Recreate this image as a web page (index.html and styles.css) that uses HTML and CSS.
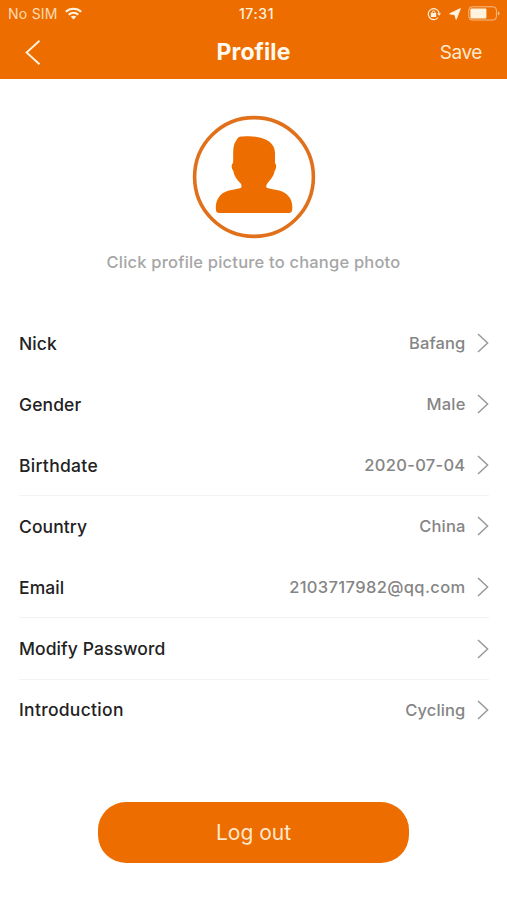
FILE: index.html
```html
<!DOCTYPE html>
<html lang="en">
<head>
<meta charset="utf-8">
<title>Profile</title>
<link rel="stylesheet" href="styles.css">
</head>
<body>
<svg width="0" height="0" class="defs">
  <symbol id="chevron" viewBox="0 0 12 20"><path d="M1 1l9.6 9L1 19" fill="none" stroke="currentColor" stroke-width="1.5"/></symbol>
</svg>
<header class="header">
  <div class="status">
    <div class="carrier">
      <span class="sim">No SIM</span>
      <svg class="wifi" width="17" height="13" viewBox="0 0 17 13" fill="none" stroke="currentColor" stroke-width="2.200">
        <path d="M.8 4.800C5 .7 12 .7 16.200 4.800"/>
        <path d="M3.700 7.800c2.800-2.500 6.800-2.500 9.600 0"/>
        <path d="M8.500 12.600L5.700 9.800c1.600-1.400 4-1.400 5.600 0z" fill="currentColor" stroke="none"/>
      </svg>
    </div>
    <span class="time">17:31</span>
    <div class="indicators">
      <svg class="lock" width="14" height="14" viewBox="0 0 14 14" fill="none" stroke="currentColor">
        <path d="M11.1 10.5A5.500 5.500 0 1 1 12.100 6" stroke-width="1.2"/>
        <path d="M10.200 6.200h3.800l-1.900 2.600z" fill="currentColor" stroke="none"/>
        <rect x="3.800" y="6" width="5.400" height="4" rx=".5" fill="currentColor" stroke="none"/>
        <path d="M5.100 6.500V5.300a1.400 1.400 0 0 1 2.800 0v1.200" stroke-width="1"/>
      </svg>
      <svg class="arrow" width="12" height="12" viewBox="0 0 12 12"><path d="M11.400.6L7.200 11.400 5.800 6.800.6 5.800z" fill="currentColor" stroke="currentColor" stroke-width=".9" stroke-linejoin="round"/></svg>
      <svg class="battery" width="32" height="15" viewBox="0 0 32 15">
        <rect x=".8" y=".8" width="27.600" height="13.200" rx="3.300" fill="none" stroke="currentColor" stroke-width="1" opacity=".6"/>
        <rect x="2.400" y="2.600" width="16" height="9.800" rx="1" fill="currentColor"/>
        <path d="M29.800 5.200q1.800.6 1.800 2.200t-1.800 2.200z" fill="currentColor" opacity=".6"/>
      </svg>
    </div>
  </div>
  <nav class="nav">
    <svg class="back" width="16" height="25" viewBox="0 0 16 25"><path d="M14.500.8L1.600 12.500l12.900 11.700" fill="none" stroke="currentColor" stroke-width="1.900"/></svg>
    <h1 class="title">Profile</h1>
    <span class="save">Save</span>
  </nav>
</header>
<main>
  <section class="photo">
    <svg class="avatar" width="124" height="124" viewBox="0 0 124 124">
      <circle cx="62" cy="62" r="59.400" fill="#fff" stroke="#e1701b" stroke-width="3.600"/>
      <path d="M41.200 37.500C41.200 29.500 43.500 26.500 45 24.200C46.200 22 48 21.600 51 21.600C58 20.600 66 21.300 73 24.200C80.500 27.500 83.600 33 83 40.500V48.300C84.700 49 84.500 54 82.600 56C81.800 61.500 78 65 75.300 68.500C74 70.500 73.800 72 74.800 72.700C78 74.500 88 74 94 78.700C99.500 83 100.700 88.500 100.200 94.500C100 97 99 98 96.500 98H27.500C25 98 24 97 23.900 94.500C23.500 88.500 25 83 30 78.700C36.500 74 46 74.500 49.200 72.700C50 71 49.500 69.500 48 67.800C45 64.500 42 61 41.400 56C39.300 54 39.200 49 40.900 48.300C41.500 45 41 41 41.200 37.500Z" fill="#ed6d00"/>
    </svg>
    <p class="hint">Click profile picture to change photo</p>
  </section>
  <section class="list">
    <div class="row"><span>Nick</span><span class="value">Bafang</span><svg class="chevron"><use href="#chevron"/></svg></div>
    <div class="row"><span>Gender</span><span class="value">Male</span><svg class="chevron"><use href="#chevron"/></svg></div>
    <div class="row line"><span class="wide">Birthdate</span><span class="value date">2020-07-04</span><svg class="chevron"><use href="#chevron"/></svg></div>
    <div class="row"><span>Country</span><span class="value">China</span><svg class="chevron"><use href="#chevron"/></svg></div>
    <div class="row line"><span>Email</span><span class="value email">2103717982@qq.com</span><svg class="chevron"><use href="#chevron"/></svg></div>
    <div class="row line"><span>Modify Password</span><span class="value"></span><svg class="chevron"><use href="#chevron"/></svg></div>
    <div class="row"><span class="wide">Introduction</span><span class="value">Cycling</span><svg class="chevron"><use href="#chevron"/></svg></div>
  </section>
  <button class="logout">Log out</button>
</main>
</body>
</html>
```
FILE: styles.css
```css
* { box-sizing: border-box; }
body {
  margin: 0;
  height: 900px;
  overflow: hidden;
  background: #fff;
  color: #222;
  font-family: Inter, "Liberation Sans", sans-serif;
}
.defs { display: block; height: 0; }
.header { height: 79px; background: #ed6d00; color: #fff3df; }
.status {
  display: grid;
  grid-template-columns: 1fr auto 1fr;
  align-items: center;
  height: 27px;
  padding: 0 7px 0 8px;
}
.carrier { display: flex; align-items: center; gap: 7px; }
.sim { font-size: 14px; letter-spacing: .25px; color: #ffdcb0; }
.time { margin-left: 5px; font-size: 14px; font-weight: 500; letter-spacing: .6px; }
.indicators { display: flex; justify-content: flex-end; align-items: center; }
.lock { margin-right: 8px; }
.arrow { margin-right: 7px; }
.nav {
  display: grid;
  grid-template-columns: 1fr auto 1fr;
  align-items: center;
  height: 50px;
  padding: 0 25px;
}
.title { margin: 0; font-size: 23px; font-weight: 700; line-height: 28px; letter-spacing: .1px; color: #fff9ee; }
.save { justify-self: end; padding-top: 1px; font-size: 19px; letter-spacing: -.4px; color: #ffe8cb; }
.photo { display: flex; flex-direction: column; align-items: center; padding-top: 36px; }
.avatar { display: block; }
.hint { margin: 13px 0 0; font-size: 16.5px; line-height: 20px; font-weight: 500; letter-spacing: .2px; color: #a6a6a6; }
.list { margin-top: 41px; padding: 0 18px 0 19px; }
.row {
  display: flex;
  align-items: center;
  height: 61.1px;
  border-bottom: 1.5px solid transparent;
  font-size: 17.5px;
  font-weight: 500;
  letter-spacing: .08px;
}
.row.line { border-color: #f3f3f3; }
.wide { letter-spacing: .3px; }
.value { margin-left: auto; margin-right: 11.5px; font-size: 16.5px; letter-spacing: .15px; color: #858585; }
.date { letter-spacing: .3px; }
.email { letter-spacing: .36px; }
.chevron { width: 12px; height: 20px; color: #999; }
.logout {
  display: block;
  width: 311px;
  height: 61px;
  margin: 61px auto 0;
  padding: 1px 0 0;
  border: 0;
  border-radius: 28px;
  background: #ed6d00;
  color: #ffe8cb;
  font: 400 21px Inter, "Liberation Sans", sans-serif;
}
```
